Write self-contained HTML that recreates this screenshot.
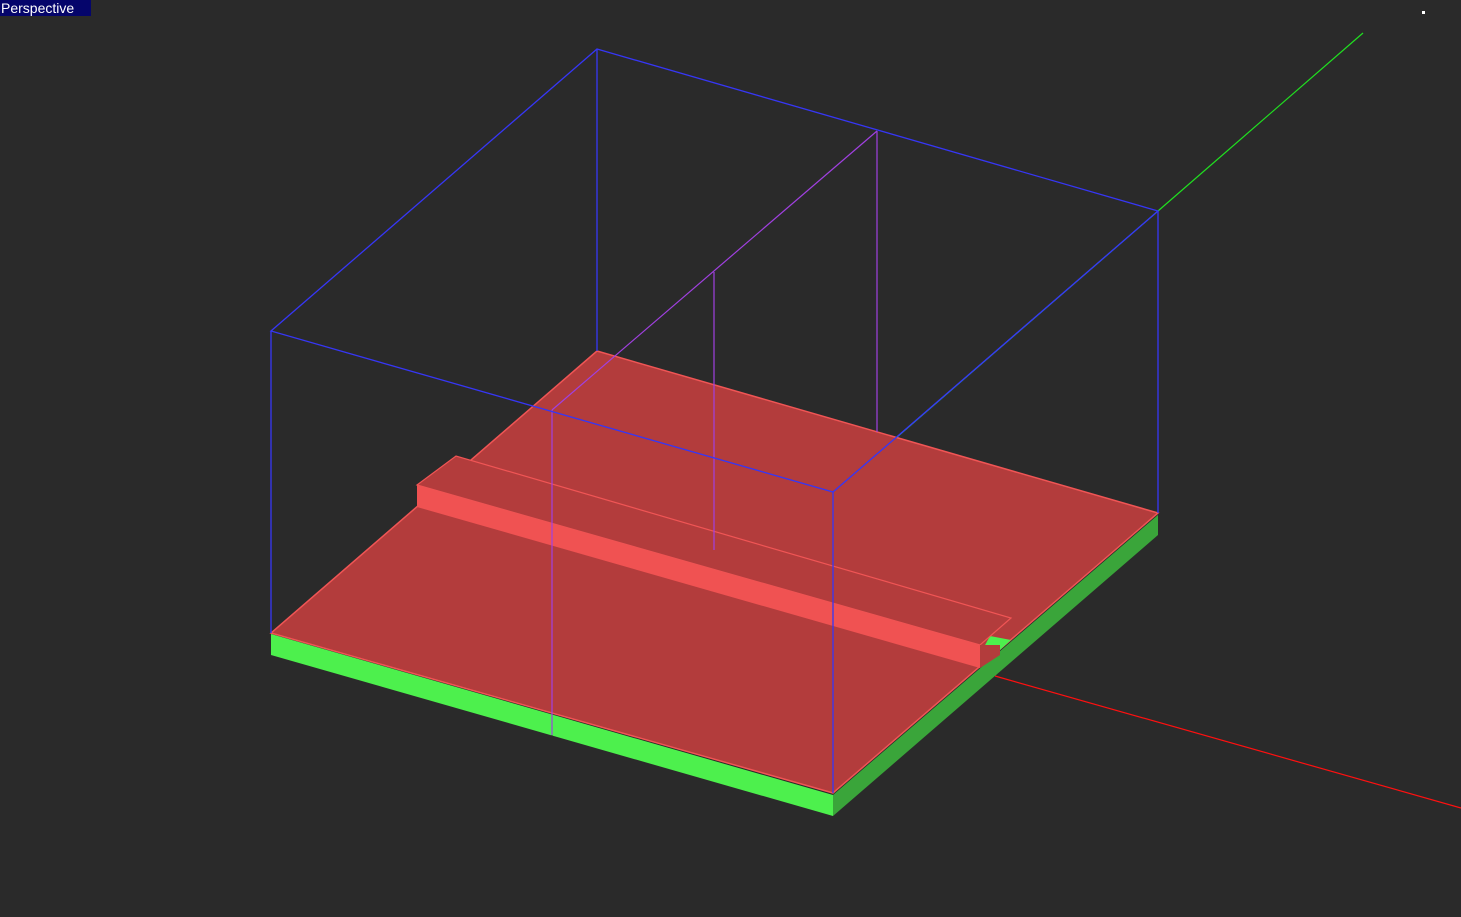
<!DOCTYPE html>
<html><head><style>
html,body{margin:0;padding:0;background:#2a2a2a;width:1461px;height:917px;overflow:hidden}
.lbl{position:absolute;left:0;top:0;width:91px;height:16px;background:#05056b;color:#fff;font:14px "Liberation Sans",sans-serif;line-height:16px;padding-left:1px;box-sizing:border-box}
</style></head><body>
<svg width="1461" height="917" style="position:absolute;left:0;top:0">
<line x1="995" y1="676" x2="1461" y2="808" stroke="#ff1010" stroke-width="1.2"/>
<line x1="1363" y1="33" x2="1158" y2="211" stroke="#20e020" stroke-width="1.2"/>
<polygon points="271,634 833,795 833,816 271,655" fill="#4df04d"/>
<polygon points="833,795 1158,515 1158,535 833,816" fill="#3aa53a"/>
<line x1="552" y1="715" x2="552" y2="736" stroke="#2a5a2a"/>
<polygon points="597,351 1158,513 833,793 271,633" fill="#b33c3c" stroke="#f05555" stroke-width="1.5"/>
<polygon points="990,636 1011,640 1000,650 984,647" fill="#4df04d"/>
<polygon points="417,485 456,456 1011,618 980,645" fill="#b33c3c" stroke="#f05555" stroke-width="1.2"/>
<polygon points="417,485 980,645 980,668 417,507" fill="#f05252"/>
<polygon points="980,645 1000,645 1000,655 980,668" fill="#b33c3c"/>
<g stroke="#a040e0" stroke-width="1.2" fill="none">
<line x1="877" y1="131" x2="552" y2="410"/>
<line x1="877" y1="131" x2="877" y2="432"/>
<line x1="714" y1="272" x2="714" y2="550"/>
<line x1="552" y1="410" x2="552" y2="735"/>
</g>
<line x1="1158" y1="211" x2="897" y2="437" stroke="#20c0a0" stroke-width="1.2"/>
<g stroke="#3636f5" stroke-width="1.3" fill="none">
<polygon points="597,49 1158,211 833,492 271,331"/>
<line x1="271" y1="331" x2="271" y2="633"/>
<line x1="597" y1="49" x2="597" y2="351"/>
<line x1="1158" y1="211" x2="1158" y2="513"/>
<line x1="833" y1="492" x2="833" y2="793"/>
</g>
<rect x="1422" y="11" width="3" height="3" fill="#fff"/>
</svg>
<div class="lbl">Perspective</div>
</body></html>
